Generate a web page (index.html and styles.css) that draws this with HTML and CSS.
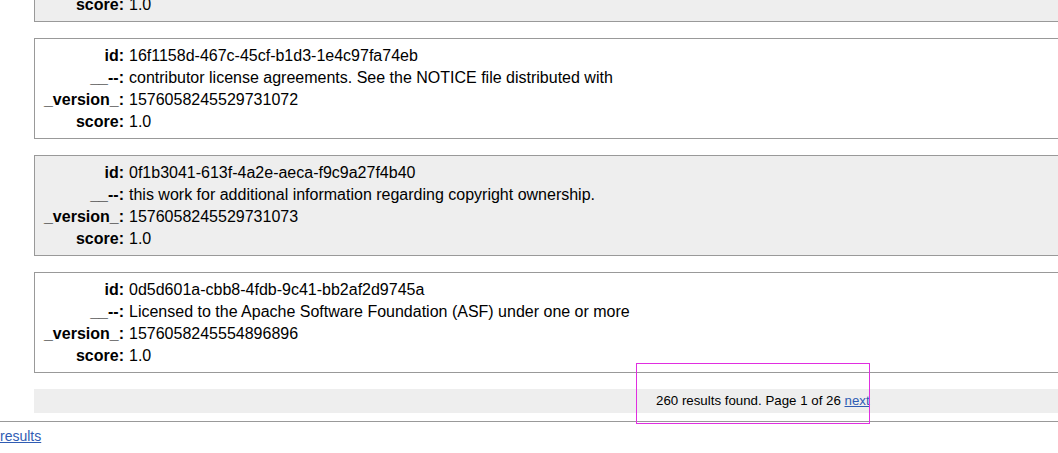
FILE: index.html
```html
<!DOCTYPE html>
<html>
<head>
<meta charset="utf-8">
<link rel="stylesheet" href="styles.css">
</head>
<body>
<div class="results">
  <div class="doc odd partial">
    <div class="row"><span class="label">score:</span><span class="value">1.0</span></div>
  </div>
  <div class="doc">
    <div class="row"><span class="label">id:</span><span class="value">16f1158d-467c-45cf-b1d3-1e4c97fa74eb</span></div>
    <div class="row"><span class="label">__--:</span><span class="value">contributor license agreements. See the NOTICE file distributed with</span></div>
    <div class="row"><span class="label">_version_:</span><span class="value">1576058245529731072</span></div>
    <div class="row"><span class="label">score:</span><span class="value">1.0</span></div>
  </div>
  <div class="doc odd">
    <div class="row"><span class="label">id:</span><span class="value">0f1b3041-613f-4a2e-aeca-f9c9a27f4b40</span></div>
    <div class="row"><span class="label">__--:</span><span class="value">this work for additional information regarding copyright ownership.</span></div>
    <div class="row"><span class="label">_version_:</span><span class="value">1576058245529731073</span></div>
    <div class="row"><span class="label">score:</span><span class="value">1.0</span></div>
  </div>
  <div class="doc">
    <div class="row"><span class="label">id:</span><span class="value">0d5d601a-cbb8-4fdb-9c41-bb2af2d9745a</span></div>
    <div class="row"><span class="label">__--:</span><span class="value">Licensed to the Apache Software Foundation (ASF) under one or more</span></div>
    <div class="row"><span class="label">_version_:</span><span class="value">1576058245554896896</span></div>
    <div class="row"><span class="label">score:</span><span class="value">1.0</span></div>
  </div>
  <div class="pagination">260 results found. Page 1 of 26 <a href="#">next</a></div>
</div>
<div class="footer"><a href="#">results</a></div>
<div class="highlight"></div>
</body>
</html>
```
FILE: styles.css
```css
html, body {
  margin: 0;
  padding: 0;
  overflow: hidden;
  background: #fff;
}
body {
  font-family: "Liberation Sans", Arial, sans-serif;
  font-size: 16px;
  color: #000;
  position: relative;
  height: 453px;
}
a {
  color: #305cb3;
  text-decoration: underline;
}
.results {
  padding-left: 34px;
  margin-right: -40px;
}
.doc {
  border: 1px solid #999;
  padding: 6px 0 5px 0;
  margin-bottom: 16px;
  background: #fff;
}
.doc.odd {
  background: #eee;
}
.doc.partial {
  margin-top: -13px;
}
.row {
  display: flex;
  line-height: 22px;
  height: 22px;
  white-space: nowrap;
}
.label {
  width: 89px;
  text-align: right;
  font-weight: bold;
  flex: none;
}
.value {
  padding-left: 5px;
}
.pagination {
  background: #eee;
  height: 24px;
  line-height: 24px;
  font-size: 13.3px;
  padding-left: 622px;
}
.footer {
  margin-top: 8px;
  border-top: 1px solid #999;
  padding-top: 6px;
  font-size: 14px;
  line-height: 17px;
}
.highlight {
  position: absolute;
  left: 636px;
  top: 363px;
  width: 232px;
  height: 59px;
  border: 1px solid #e02ee0;
}
```
